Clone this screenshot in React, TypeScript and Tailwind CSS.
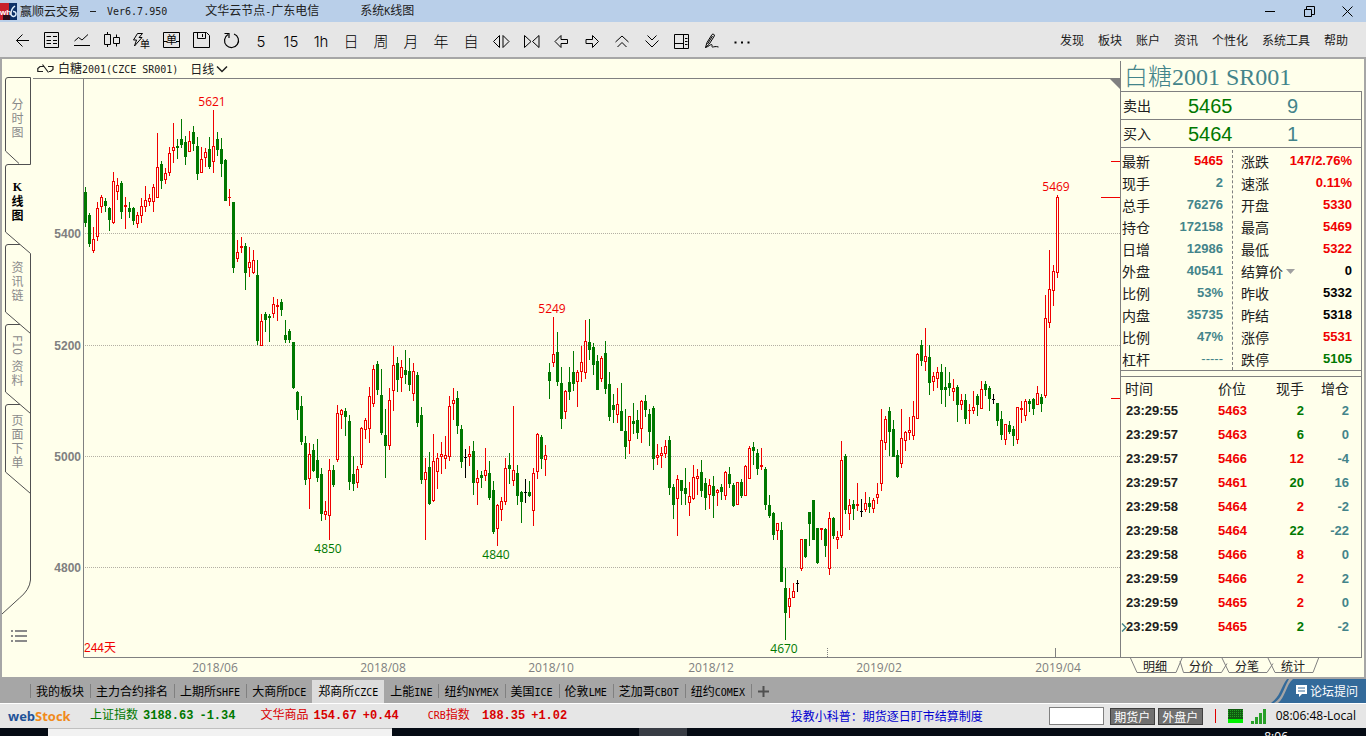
import type { ReactNode } from "react";
import { clsx } from "clsx";

type Tone = "up" | "down" | "flat" | "ink";

const TONE: Record<Tone, string> = {
  up: "text-[#f00000]",
  down: "text-[#007800]",
  flat: "text-[#43848a]",
  ink: "text-black",
};

// One candle per entry: kind, high, low, body top, body bottom (plot rows).
// r = rising, g = falling, k = unchanged
const CANDLES = `
g187,227,192,223 g213,247,215,244 r227,253,239,251 r202,241,208,237 r195,213,197,207 g198,212,201,206
g207,231,208,220 r172,224,181,223 r178,200,185,192 g181,219,183,212 r197,229,205,207 g202,218,208,212
g207,225,208,221 r212,228,215,224 r198,223,206,216 r186,212,200,207 r194,206,198,202 r184,212,187,202
r133,198,167,198 g161,189,164,181 r168,184,173,180 r147,176,153,173 r123,163,147,151 g139,159,146,148
g119,148,139,145 g136,165,142,157 r131,152,141,152 g126,151,132,144 g137,180,146,174 r147,173,159,173
r148,167,152,158 g137,169,149,167 r110,173,146,162 g132,156,139,150 g138,177,149,164 g159,201,160,201
r189,206,197,198 g202,273,202,268 r240,262,252,259 r237,253,246,248 g243,290,246,273 r247,277,262,268
r250,274,260,273 g260,345,275,341 r314,346,321,346 g312,332,314,320 g314,342,316,318 r297,318,304,314
r299,321,305,307 g299,316,302,310 g320,343,335,340 g329,343,331,340 g342,389,342,388 g391,420,392,410
g396,445,406,442 g436,485,443,480 r443,509,454,479 g444,472,450,471 g439,482,460,478 g468,521,474,514
r501,520,511,515 r459,540,470,516 g465,487,470,485 r405,462,413,460 r409,429,410,415 g408,436,411,417
g415,490,421,482 g456,491,474,484 r466,488,469,483 r427,468,428,465 r418,439,420,430 r387,443,396,429
r365,407,369,404 g361,395,364,390 g369,435,395,433 g409,478,435,446 r388,450,400,446 r346,411,365,391
g357,392,363,380 r360,392,367,378 g350,384,370,375 g358,391,371,385 r363,401,371,394 g372,427,375,423
g407,484,415,480 r458,540,472,480 g452,505,467,504 r434,502,461,501 r453,489,458,472 r442,474,454,457
r436,469,455,459 r396,461,406,457 r388,420,400,404 g391,434,398,426 g425,468,429,462 k449,478,457,458
r446,466,454,457 g441,495,451,483 r470,505,478,483 g471,488,475,478 r448,481,470,476 g461,500,473,498
g481,534,490,532 r504,546,505,529 r497,521,501,510 r458,505,468,502 g453,484,465,469 r406,486,470,481
g465,505,473,496 g491,523,492,502 k479,503,492,493 g481,497,492,496 r468,526,473,511 r433,479,434,472
g435,469,437,459 r445,476,455,460 g363,399,372,381 r317,367,354,363 g332,386,352,382 g367,429,383,419
r390,419,391,412 g367,400,382,392 g351,391,372,384 r370,407,372,382 r346,382,362,372 r320,379,341,373
g319,360,342,350 g343,375,347,365 g355,390,361,390 r356,382,358,379 g341,394,353,389 g372,421,384,417
g394,423,405,410 r388,423,404,415 g383,431,411,431 g409,459,431,447 r416,454,416,441 g403,434,421,424
g410,439,420,433 r400,443,401,429 g395,417,401,410 g409,446,414,432 g406,470,408,459 r444,465,455,458
r447,468,453,456 r440,458,446,454 g436,495,440,488 g484,519,487,505 r475,536,479,499 g480,505,480,491
g468,505,488,494 r482,516,496,503 r465,500,477,499 r469,495,476,479 g460,497,472,491 g478,510,483,498
r479,509,485,495 g476,518,486,496 r489,506,490,493 g484,500,487,492 r471,500,472,496 g467,488,474,484
g483,507,485,506 r482,505,482,505 g479,498,482,496 r465,496,466,496 r446,479,448,479 g442,465,447,451
g449,475,453,469 r448,470,465,467 g467,510,469,505 g495,518,505,516 g512,540,513,535 r523,540,523,531
g522,582,530,582 g568,640,588,613 r588,618,598,607 r583,598,591,598 k580,592,583,584 r539,571,539,569
g539,558,539,557 g512,546,512,524 g500,540,500,540 g528,564,528,563 r528,540,528,530 g528,557,529,546
r512,575,518,569 g517,539,518,536 r531,549,537,540 r441,538,460,536 g454,514,456,510 r499,530,505,514
g500,520,504,509 r483,511,504,506 k499,517,511,512 r492,512,503,510 g497,513,503,507 r498,513,500,509
r483,504,494,498 r409,491,440,484 r416,450,419,443 g407,456,411,432 g420,457,429,457 g450,478,455,477
r409,468,438,464 r431,451,432,441 r417,440,430,433 r401,440,416,436 r353,419,354,419 g340,366,345,361
r328,371,356,362 g345,395,357,383 r372,391,376,382 r367,388,372,379 g364,404,372,390 g367,407,387,390
g372,396,383,388 r379,401,388,392 g385,422,387,405 r394,410,400,405 g394,424,400,419 r404,424,410,411
r391,414,407,411 g394,416,396,405 r381,409,389,409 g381,396,384,390 g386,411,388,399 k394,404,399,400
g403,426,403,421 g411,440,419,435 r424,445,424,440 g421,434,425,432 g426,446,429,436 r407,444,407,440
r401,423,408,410 r399,421,401,416 g399,412,401,404 g398,415,399,409 r386,405,393,405 g394,412,397,404
r295,398,318,396 r250,328,289,323 r265,306,271,291 r195,278,197,273`
  .trim()
  .split(/\s+/)
  .map((entry) => {
    const [high, low, top, bottom] = entry.slice(1).split(",").map(Number);
    return { kind: entry[0], high, low, top, bottom };
  });

const CANDLE_FILL: Record<string, string> = { r: "#f00000", g: "#007800", k: "#000000" };

const GRID = [
  { price: "5400", y: 233 },
  { price: "5200", y: 345 },
  { price: "5000", y: 456 },
  { price: "4800", y: 567 },
];

const MONTHS = [
  { label: "2018/06", x: 215 },
  { label: "2018/08", x: 383 },
  { label: "2018/10", x: 551 },
  { label: "2018/12", x: 711 },
  { label: "2019/02", x: 879 },
  { label: "2019/04", x: 1058 },
];

const EXTREMES = [
  { value: "5621", x: 212, y: 106, color: "#f00000" },
  { value: "5249", x: 552, y: 313, color: "#f00000" },
  { value: "5469", x: 1056, y: 191, color: "#f00000" },
  { value: "4850", x: 328, y: 553, color: "#007800" },
  { value: "4840", x: 496, y: 559, color: "#007800" },
  { value: "4670", x: 784, y: 653, color: "#007800" },
];

type QuoteRow = { label: string; value: string; tone: Tone; menu?: boolean };

const QUOTE_LEFT: QuoteRow[] = [
  { label: "最新", value: "5465", tone: "up" },
  { label: "现手", value: "2", tone: "flat" },
  { label: "总手", value: "76276", tone: "flat" },
  { label: "持仓", value: "172158", tone: "flat" },
  { label: "日增", value: "12986", tone: "flat" },
  { label: "外盘", value: "40541", tone: "flat" },
  { label: "比例", value: "53%", tone: "flat" },
  { label: "内盘", value: "35735", tone: "flat" },
  { label: "比例", value: "47%", tone: "flat" },
  { label: "杠杆", value: "-----", tone: "flat" },
];

const QUOTE_RIGHT: QuoteRow[] = [
  { label: "涨跌", value: "147/2.76%", tone: "up" },
  { label: "速涨", value: "0.11%", tone: "up" },
  { label: "开盘", value: "5330", tone: "up" },
  { label: "最高", value: "5469", tone: "up" },
  { label: "最低", value: "5322", tone: "up" },
  { label: "结算价", value: "0", tone: "ink", menu: true },
  { label: "昨收", value: "5332", tone: "ink" },
  { label: "昨结", value: "5318", tone: "ink" },
  { label: "涨停", value: "5531", tone: "up" },
  { label: "跌停", value: "5105", tone: "down" },
];

const TICKS: [string, string, string, Tone, string][] = [
  ["23:29:55", "5463", "2", "down", "2"],
  ["23:29:57", "5463", "6", "down", "0"],
  ["23:29:57", "5466", "12", "up", "-4"],
  ["23:29:57", "5461", "20", "down", "16"],
  ["23:29:58", "5464", "2", "up", "-2"],
  ["23:29:58", "5464", "22", "down", "-22"],
  ["23:29:58", "5466", "8", "up", "0"],
  ["23:29:59", "5466", "2", "up", "2"],
  ["23:29:59", "5465", "2", "up", "0"],
  ["23:29:59", "5465", "2", "down", "-2"],
];

const BOARDS = [
  "我的板块",
  "主力合约排名",
  "上期所SHFE",
  "大商所DCE",
  "郑商所CZCE",
  "上能INE",
  "纽约NYMEX",
  "美国ICE",
  "伦敦LME",
  "芝加哥CBOT",
  "纽约COMEX",
];

const MENUS = ["发现", "板块", "账户", "资讯", "个性化", "系统工具", "帮助"];

// Latin runs are set half as wide as the Chinese characters around them
function Song({ text }: { text: string }) {
  return (
    <>
      {text.split(/([\x20-\x7e]+)/).map((part, i) =>
        /^[\x20-\x7e]+$/.test(part) ? (
          <span key={i} className="font-['DejaVu_Sans_Mono',monospace] text-[10px] whitespace-pre">
            {part}
          </span>
        ) : (
          part
        ),
      )}
    </>
  );
}

function TitleBar() {
  return (
    <header className="flex h-[22px] shrink-0 items-center bg-[#b9cfe9] text-xs leading-4 whitespace-nowrap">
      <svg width="17" height="17" viewBox="0 0 17 17" aria-hidden="true">
        <rect width="10" height="17" fill="#c8202c" />
        <rect x="9" width="8" height="17" fill="#0b2f66" />
        <rect x="3" y="12" width="7" height="5" fill="#2a0f1c" />
        <text x="0" y="12" fontSize="8" fontWeight="700" fill="#fff" fontFamily="Liberation Sans">
          wh
        </text>
        <path d="M15 3c-3 2-4 5-4 8a2.500 2.500 0 1 0 2-2.500" fill="none" stroke="#dff0ff" strokeWidth="1.500" />
      </svg>
      <h1 className="ml-[3px]">赢顺云交易</h1>
      <span className="ml-[10px] h-px w-[6px] bg-[#202020]" />
      <span className="ml-[11px]">
        <Song text="Ver6.7.950" />
      </span>
      <span className="ml-[38px]">
        <Song text="文华云节点-广东电信" />
      </span>
      <span className="ml-[41px]">
        <Song text="系统K线图" />
      </span>
      <div className="ml-auto flex text-black">
        <button aria-label="最小化" className="flex h-[22px] w-[39px] items-center justify-center">
          <svg width="11" height="11" viewBox="0 0 11 11" stroke="currentColor" fill="none">
            <path d="M0 5.500h10" />
          </svg>
        </button>
        <button aria-label="还原" className="flex h-[22px] w-[39px] items-center justify-center">
          <svg width="11" height="11" viewBox="0 0 11 11" stroke="currentColor" fill="none">
            <path d="M.5 3.500h7v7h-7zM2.500 3.500v-3h8v8h-3" />
          </svg>
        </button>
        <button aria-label="关闭" className="flex h-[22px] w-[37px] items-center justify-center">
          <svg width="11" height="11" viewBox="0 0 11 11" stroke="currentColor" fill="none">
            <path d="M.5.5l10 10M10.500.5l-10 10" />
          </svg>
        </button>
      </div>
    </header>
  );
}

function glyph(text: string) {
  return (
    <text
      x="14"
      y="25"
      textAnchor="middle"
      fontSize="15"
      fontWeight="300"
      fill="currentColor"
      stroke="none"
      fontFamily={/\d/.test(text) ? "Inter, sans-serif" : "'Noto Sans CJK SC', sans-serif"}
    >
      {text}
    </text>
  );
}

const TOOLS: { name: string; icon: ReactNode }[] = [
  { name: "返回", icon: <path d="M22 18.500H9.500M15.500 12.500l-6 6 6 6" /> },
  {
    name: "报价",
    icon: <path d="M7.500 10.500h14v15h-14zM9.500 14.500H14M16 14.500h4M9.500 18.500H14M16 18.500h4M9.500 21.500H14M16 21.500h4" />,
  },
  { name: "分时", icon: <path d="M7 23.500h16M7.500 19l4-3.500L15 18l6-5.500" /> },
  {
    name: "K线",
    icon: <path d="M7.500 12.500h6v10h-6zM10.500 10v2.500M10.500 22.500V25M16.500 15.500h6v6h-6zM19.500 12.500v3M19.500 21.500v3" />,
  },
  {
    name: "闪电下单",
    icon: (
      <>
        <path d="M10.500 11.500h5L12 15.500h3L7.500 24l2-6h-3z" />
        <text x="13" y="26" fontSize="10" fill="currentColor" stroke="none" fontFamily="'Noto Sans CJK SC', sans-serif">
          单
        </text>
      </>
    ),
  },
  {
    name: "下单",
    icon: (
      <>
        <path d="M6.500 10.500h16v15h-16zM6.500 19.500h4M19 19.500h3.500" />
        <text x="9" y="22" fontSize="11" fill="currentColor" stroke="none" fontFamily="'Noto Sans CJK SC', sans-serif">
          单
        </text>
      </>
    ),
  },
  { name: "保存", icon: <path d="M6.500 10.500h13l3 3v12h-16zM10.500 10.500v6h8v-6M15.500 12v3" /> },
  { name: "刷新", icon: <path d="M11 12.500a7 7 0 1 0 6-.5M7.500 11.500H12V16" strokeWidth="1.200" /> },
  { name: "5分钟", icon: glyph("5") },
  { name: "15分钟", icon: glyph("15") },
  { name: "1小时", icon: glyph("1h") },
  { name: "日线", icon: glyph("日") },
  { name: "周线", icon: glyph("周") },
  { name: "月线", icon: glyph("月") },
  { name: "年线", icon: glyph("年") },
  { name: "自定义", icon: glyph("自") },
  { name: "拉宽", icon: <path d="M6.500 19.500l6-6v12zM22 19.500l-6-6v12z" /> },
  { name: "压缩", icon: <path d="M7.500 13.500v12l6.500-6zM22 13.500v12l-6.500-6z" /> },
  { name: "左移", icon: <path d="M8 19.500l6-6v4h6.500v4H14v4z" /> },
  { name: "右移", icon: <path d="M21.500 19.500l-6-6v4H9v4h6.500v4z" /> },
  { name: "放大", icon: <path d="M8.500 20l6.500-6 6.500 6M10.500 25l4.500-4.500 4.500 4.500" /> },
  { name: "缩小", icon: <path d="M8.500 18.500l6.500 6.500 6.500-6.500M10.500 13.500L15 18l4.500-4.500" /> },
  {
    name: "布局",
    icon: <path d="M7.500 12.500h14v14h-14zM16.500 12.500v14M7.500 21.500h9M18 16.500h2.500M18 19.500h2.500M18 22.500h2.500" />,
  },
  {
    name: "画线",
    icon: <path d="M8.500 25.500l1.500-5 5-8c1-1 3 0 2.300 1.500l-5 8-3.800 3.500c3-1 5-3 6-3 1.500 0-.5 2.500 1 2.500s3-1 6 0M10.500 22l5-8" />,
  },
  {
    name: "更多",
    icon: <path d="M7.500 20.500h2M14 20.500h2M20.500 20.500h2" strokeWidth="2" />,
  },
];

function Toolbar() {
  return (
    <div className="flex h-[37px] shrink-0 items-center border-b-2 border-[#a6a6a6] bg-[#e6e6e6] pr-[18px] pl-[7px]">
      {TOOLS.map((tool) => (
        <button key={tool.name} aria-label={tool.name} className="h-[35px] w-[30px] text-black">
          <svg width="30" height="35" viewBox="0 0 30 35" fill="none" stroke="currentColor">
            {tool.icon}
          </svg>
        </button>
      ))}
      <nav className="ml-auto flex gap-[14px] text-xs leading-4 whitespace-nowrap">
        {MENUS.map((menu) => (
          <button key={menu}>{menu}</button>
        ))}
      </nav>
    </div>
  );
}

const SIDE_TABS = ["分时图", "K线图", "资讯链", "F10资料", "页面下单"];

function SideTabs() {
  return (
    <nav className="relative flex w-[31px] shrink-0 flex-col pt-[18px]">
      <svg
        className="pointer-events-none absolute top-0 left-0"
        width="31"
        height="618"
        viewBox="2 59 31 618"
        fill="none"
        stroke="#505050"
        aria-hidden="true"
      >
        <path d="M19 163.500L5.500 151V80q0-2.500 2.500-2.500h22.500v87H8q-2.500 0-2.500 2.500v65l25 21.500V580q-1 10-11 18L2 614" />
        <path d="M20 244.500H8q-2.500 0-2.500 2.500v65l25 21.500M20 324.500H8q-2.500 0-2.500 2.500v65l25 21.500M20 404.500H8q-2.500 0-2.500 2.500v65l25 21.500" />
      </svg>
      {SIDE_TABS.map((tab, i) => (
        <button
          key={tab}
          className={clsx(
            "flex flex-col items-center justify-center pb-[6px] text-xs leading-[14px]",
            i === 0 ? "h-[87px]" : "h-20",
            i === 1 ? "font-bold text-black" : "text-[#8a8a8a]",
          )}
        >
          {(tab.match(/[A-Z0-9]+|./g) ?? []).map((part) => (
            <span
              key={part}
              className={clsx(
                part === "F10" && "mb-1 [writing-mode:vertical-rl]",
                part === "K" && "font-['Liberation_Serif',serif]",
              )}
            >
              {part}
            </span>
          ))}
        </button>
      ))}
      <button aria-label="列表" className="mt-auto mb-[34px] ml-[9px] w-4 text-[#8a8a8a]">
        <svg width="17" height="14" viewBox="0 0 17 14" stroke="currentColor" strokeWidth="2">
          <path d="M0 2h2M4 2h12M0 7h2M4 7h12M0 12h2M4 12h12" />
        </svg>
      </button>
    </nav>
  );
}

function Chart() {
  return (
    <section className="flex min-w-0 flex-1 flex-col">
      <div className="flex h-5 shrink-0 items-center border-b border-[#808080] pl-1 text-xs leading-[19px] whitespace-nowrap">
        <svg width="17" height="11" viewBox="0 0 17 11" fill="none" stroke="#202020" strokeWidth="1.200" aria-hidden="true">
          <path d="M7 3.500H3L.8 5.500v3H6M5.500 1.500l6 8M11 3.500h5v3l-2.500 2H12" />
        </svg>
        <h2 className="ml-1">
          <Song text="白糖2001(CZCE SR001)" />
        </h2>
        <label className="relative ml-3 flex items-center">
          <span className="sr-only">周期</span>
          <select className="h-[19px] w-[38px] appearance-none bg-transparent leading-[18px]">
            <option>日线</option>
          </select>
          <svg
            className="pointer-events-none absolute right-0"
            width="12"
            height="8"
            viewBox="0 0 12 8"
            fill="none"
            stroke="#202020"
            strokeWidth="1.500"
          >
            <path d="M1 1.500l5 5 5-5" />
          </svg>
        </label>
      </div>
      <svg className="block min-h-0 w-full flex-1" viewBox="33 79 1087 598" preserveAspectRatio="xMinYMin meet">
        <path d="M83.500 79V657.500H1120" fill="none" stroke="#808080" />
        <path d="M1110 79h10v10z" fill="#808080" />
        {GRID.map((line) => (
          <g key={line.price}>
            <path d={`M85 ${line.y + 0.5}H1120`} stroke="#b4b0a4" strokeDasharray="1 1" shapeRendering="crispEdges" />
            <text
              x="81"
              y={line.y + 5}
              textAnchor="end"
              fontSize="12"
              fontWeight="700"
              fill="#808080"
              fontFamily="Liberation Sans, sans-serif"
            >
              {line.price}
            </text>
          </g>
        ))}
        <g shapeRendering="crispEdges">
          {CANDLES.map((c, i) => {
            const x = 85 + i * 4;
            const fill = CANDLE_FILL[c.kind];
            const height = c.bottom - c.top;
            return (
              <g key={i} fill={fill}>
                <rect x={x} y={c.high} width="1" height={c.low - c.high} />
                <rect x={x - 1} y={c.top} width="3" height={height} />
                {c.kind === "r" && height > 2 && (
                  <rect x={x} y={c.top + 1} width="1" height={height - 2} fill="#ffffeb" />
                )}
              </g>
            );
          })}
          <path d="M1111 161.500h9M1101 197.500h19M1111 398.500h9" stroke="#f00000" />
          <path d="M827.500 648v9" stroke="#808080" strokeDasharray="1 1" />
          <path d="M1055.500 648v9" stroke="#808080" />
        </g>
        <g fontFamily="Open Sans, sans-serif" fontSize="12" textAnchor="middle">
          {EXTREMES.map((e) => (
            <text key={e.value} x={e.x} y={e.y} fill={e.color}>
              {e.value}
            </text>
          ))}
          {MONTHS.map((m) => (
            <text key={m.label} x={m.x} y="672" fill="#808080">
              {m.label}
            </text>
          ))}
        </g>
        <text x="84" y="652" fontSize="12" fill="#f00000" fontFamily="Liberation Sans, 'Noto Sans CJK SC', sans-serif">
          244天
        </text>
      </svg>
    </section>
  );
}

function BidAsk({ label, price, size }: { label: string; price: string; size: string }) {
  return (
    <div className="flex h-7 items-center border-b border-[#808080] font-['Liberation_Sans','Noto_Sans_CJK_SC',sans-serif] text-xl leading-7">
      <span className="w-[67px] pl-[2px] text-sm">{label}</span>
      <span className="w-[99px] text-[#007800]">{price}</span>
      <span className="text-[#43848a]">{size}</span>
    </div>
  );
}

function QuoteTable({ rows, className }: { rows: QuoteRow[]; className: string }) {
  return (
    <table className={className}>
      <tbody>
        {rows.map((row, i) => (
          <tr key={i} className="h-[22px] leading-5">
            <th scope="row" className="relative p-0 text-left text-sm leading-5 font-normal whitespace-nowrap">
              {row.label}
              {row.menu && (
                <svg
                  className="absolute top-[9px] left-[45px]"
                  width="9"
                  height="5"
                  viewBox="0 0 9 5"
                  fill="#a0a0a0"
                  aria-hidden="true"
                >
                  <path d="M0 0h9L4.500 5z" />
                </svg>
              )}
            </th>
            <td
              className={clsx(
                "p-0 text-right font-['Liberation_Sans',sans-serif] text-[13px] leading-5",
                row.value === "-----" ? "font-normal" : "font-bold",
                TONE[row.tone],
              )}
            >
              {row.value}
            </td>
          </tr>
        ))}
      </tbody>
    </table>
  );
}

function TickTable() {
  return (
    <table className="w-full table-fixed">
      <thead>
        <tr className="h-[22px] text-sm leading-5">
          <th className="w-[97px] p-0 pl-1 text-left font-normal">时间</th>
          <th className="w-9 p-0 text-left font-normal">价位</th>
          <th className="w-[50px] p-0 text-right font-normal">现手</th>
          <th className="p-0 pr-3 text-right font-normal">增仓</th>
        </tr>
      </thead>
      <tbody className="font-['Liberation_Sans',sans-serif] text-[13px] font-bold">
        {TICKS.map(([time, price, lots, tone, change], i) => (
          <tr key={i} className="h-6 leading-6">
            <td className="relative p-0 pl-[5px] text-[#202020]">
              {i === TICKS.length - 1 && (
                <svg
                  className="absolute top-2 left-0"
                  width="6"
                  height="9"
                  viewBox="0 0 6 9"
                  fill="none"
                  stroke="#43848a"
                  strokeWidth="1.500"
                  aria-hidden="true"
                >
                  <path d="M1 .5l4 4-4 4" />
                </svg>
              )}
              {time}
            </td>
            <td className="p-0 text-[#f00000]">{price}</td>
            <td className={clsx("p-0 text-right", TONE[tone])}>{lots}</td>
            <td className="p-0 pr-3 text-right text-[#43848a]">{change}</td>
          </tr>
        ))}
      </tbody>
    </table>
  );
}

function QuotePanel() {
  return (
    <aside className="flex w-[244px] shrink-0 flex-col pt-[2px]">
      <div className="mr-[2px] flex flex-1 flex-col border-l border-[#808080]">
        <h2 className="flex h-[30px] items-center pt-[2px] pl-[3px] font-['Liberation_Serif','Noto_Sans_CJK_SC',serif] text-2xl leading-7 font-light text-[#43848a]">
          白糖2001 SR001
        </h2>
        <div className="flex flex-1 flex-col border-t border-r border-b border-[#808080]">
          <BidAsk label="卖出" price="5465" size="9" />
          <BidAsk label="买入" price="5464" size="1" />
          <div className="flex pt-[2px]">
            <QuoteTable rows={QUOTE_LEFT} className="ml-px w-[101px] shrink-0" />
            <QuoteTable
              rows={QUOTE_RIGHT}
              className="ml-[9px] flex-1 border-separate border-spacing-0 border-l border-dashed border-[#808080] pr-[9px] pl-2"
            />
          </div>
          <div className="h-[7px] border-y border-[#808080]" />
          <TickTable />
        </div>
      </div>
      <div className="relative flex h-[19px] shrink-0 gap-[22px] pl-[23px] text-xs leading-4">
        <svg
          className="pointer-events-none absolute -top-px left-0"
          width="200"
          height="17"
          viewBox="1120 657 200 17"
          fill="none"
          stroke="#808080"
          aria-hidden="true"
        >
          <path d="M1130 657l7 15.500h39l6.500-15.500M1180 661l3.500 11.500h38l5.500-9M1222 658l7 14.500h38l6-9M1268 658l7 14.500h38l6-15.500" />
        </svg>
        {["明细", "分价", "分笔", "统计"].map((tab) => (
          <button key={tab} className="h-4">
            {tab}
          </button>
        ))}
      </div>
    </aside>
  );
}

function BoardTabs() {
  return (
    <div className="relative flex h-[26px] shrink-0 items-center bg-[#a6a6a6] pt-[2px] pl-[30px] text-xs whitespace-nowrap">
      {BOARDS.map((board, i) => (
        <button
          key={board}
          className={clsx(
            "pr-[6px] pl-[5px] text-black",
            board === "郑商所CZCE"
              ? "h-[23px] border-l border-[#dcdcdc] bg-[#dcdcdc]"
              : clsx("h-[14px] border-l leading-[14px]", i === 5 ? "border-transparent" : "border-[#808080]"),
          )}
        >
          <Song text={board} />
        </button>
      ))}
      <button aria-label="添加板块" className="flex h-[14px] items-center border-l border-[#808080] pl-[6px]">
        <svg width="11" height="11" viewBox="0 0 11 11" stroke="#505050" strokeWidth="2">
          <path d="M0 5.500h11M5.500 0v11" />
        </svg>
      </button>
      <a href="#forum" className="relative ml-auto flex h-6 w-[96px] items-center pl-[26px] text-white">
        <svg className="absolute inset-0" width="96" height="24" viewBox="0 0 96 24" fill="#336a9a" aria-hidden="true">
          <path d="M23 0h73v24H8C15 19 16 6 23 0z" />
          <path d="M17 0h2C13 10 13 18 4 24H1C10 18 11 8 17 0z" />
        </svg>
        <svg className="relative" width="11" height="12" viewBox="0 0 11 12" aria-hidden="true">
          <path d="M0 0h11v9H6l-3 3V9H0z" fill="#fff" />
          <path d="M2 3h7M2 6h7" stroke="#336a9a" />
        </svg>
        <span className="relative ml-[3px]">论坛提问</span>
      </a>
    </div>
  );
}

function IndexQuote({ name, value, change, up }: { name: string; value: string; change: string; up?: boolean }) {
  return (
    <span
      className={clsx(
        "flex items-center font-['Liberation_Mono','Noto_Sans_CJK_SC',monospace] font-bold",
        up ? "text-[#d80000]" : "text-[#007800]",
      )}
    >
      <span className="font-normal">
        <Song text={name} />
      </span>
      <span className="ml-[5px] whitespace-pre">{value}</span>
      <span className="ml-[6px]">{change}</span>
    </span>
  );
}

function StatusBar() {
  return (
    <footer className="flex h-[25px] shrink-0 items-center border-t border-white bg-[#e6e6e6] text-xs leading-4 whitespace-nowrap">
      <a
        href="#webstock"
        className="ml-2 w-[82px] font-['Open_Sans',sans-serif] text-[13px] leading-5 font-bold text-[#1f5298]"
      >
        web<span className="text-[#f08a1c]">Stock</span>
      </a>
      <IndexQuote name="上证指数" value="3188.63" change="-1.34" />
      <span className="ml-[25px]">
        <IndexQuote name="文华商品" value="154.67" change="+0.44" up />
      </span>
      <span className="ml-[29px]">
        <IndexQuote name="CRB指数" value=" 188.35" change="+1.02" up />
      </span>
      <div className="ml-auto flex items-center pr-[10px]">
        <a href="#lesson" className="text-[#0000d0]">
          投教小科普：期货逐日盯市结算制度
        </a>
        <input aria-label="搜索" className="ml-[66px] h-[18px] w-[55px] border border-[#808080] bg-white px-1" />
        <button className="ml-[6px] h-[17px] w-[45px] border border-[#404040] bg-[#707070] leading-[15px] text-white">
          期货户
        </button>
        <button className="ml-[3px] h-[17px] w-[45px] border border-[#404040] bg-[#707070] leading-[15px] text-white">
          外盘户
        </button>
        <span className="ml-3 h-[14px] w-px bg-[#e00000]" />
        <svg className="ml-3" width="15" height="14" viewBox="0 0 15 14" aria-hidden="true">
          <rect width="15" height="10" fill="#105c10" />
          <path d="M0 1.500h15M0 3.500h15M0 5.500h15M0 7.500h15" stroke="#20a020" strokeDasharray="1 1" />
          <rect y="10" width="15" height="4" fill="#00f000" />
        </svg>
        <svg className="ml-2" width="15" height="15" viewBox="0 0 15 15" fill="#28a028" aria-hidden="true">
          <path d="M0 12h3v3H0zM4 8h3v7H4zM8 4h3v11H8zM12 0h3v15h-3z" />
        </svg>
        <span className="ml-[10px] font-['Open_Sans',sans-serif] text-black">08:06:48-Local</span>
      </div>
    </footer>
  );
}

function Taskbar() {
  return (
    <div className="relative flex h-2 shrink-0 overflow-hidden bg-[#050b14]">
      <div className="ml-12 w-[344px] border-t border-[#c0c0c0] bg-[#f2f2f2]" />
      <div className="ml-[247px] w-12 bg-[#383c44]" />
      <span className="mr-[78px] ml-auto pt-[3px] font-['Open_Sans',sans-serif] text-xs leading-3 text-white">8:06</span>
    </div>
  );
}

export default function App() {
  return (
    <div className="flex min-h-screen flex-col bg-[#a6a6a6] font-['Noto_Sans_CJK_SC',sans-serif] text-[#202020]">
      <TitleBar />
      <Toolbar />
      <main className="flex flex-1 border-x-2 border-[#a6a6a6] bg-[#ffffeb]">
        <SideTabs />
        <Chart />
        <QuotePanel />
      </main>
      <BoardTabs />
      <StatusBar />
      <Taskbar />
    </div>
  );
}
